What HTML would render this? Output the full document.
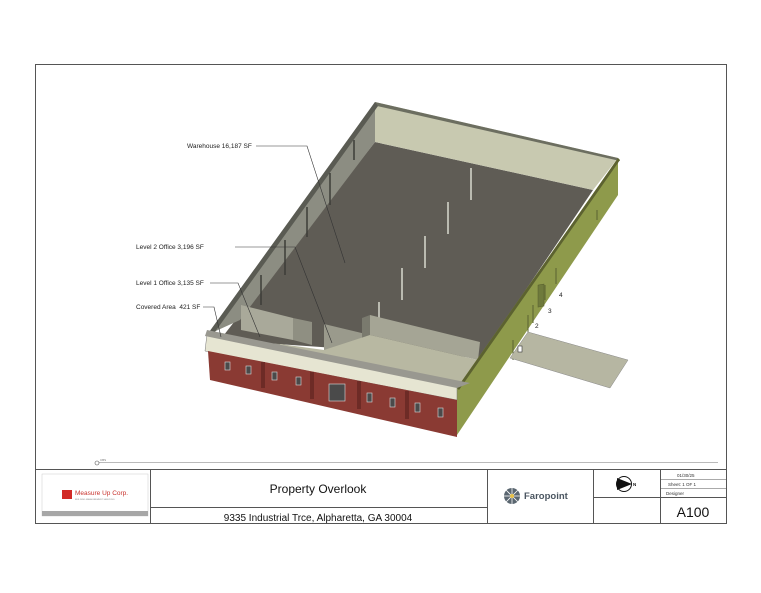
<!DOCTYPE html>
<html><head><style>
body{margin:0;background:#fff;width:761px;height:588px;overflow:hidden;font-family:"Liberation Sans",sans-serif;}
</style></head><body>
<svg width="761" height="588" viewBox="0 0 761 588" xmlns="http://www.w3.org/2000/svg" font-family="Liberation Sans, sans-serif">
<rect x="35.5" y="64.5" width="691" height="459" fill="#fff" stroke="#555" stroke-width="1"/>
<!-- building -->
<!-- floor -->
<polygon points="375,142 593,190 480,358 220,340" fill="#5f5c55"/>
<!-- back wall -->
<polygon points="375,102 618,158 593,190 375,142" fill="#c8c9b0"/>
<polygon points="375,102 618,158 620,161 377,106" fill="#6c6e60"/>
<!-- left wall -->
<polygon points="375,102 375,142 240,320 207,335" fill="#8c8d82"/>
<polygon points="375,102 207,335 212,336 378,106" fill="#5a5b53"/>
<!-- columns -->
<g stroke="#d9d9cf" stroke-width="1.5">
<line x1="471" y1="168" x2="471" y2="200"/><line x1="448" y1="202" x2="448" y2="234"/><line x1="425" y1="236" x2="425" y2="268"/><line x1="402" y1="268" x2="402" y2="300"/><line x1="379" y1="302" x2="379" y2="318"/>
</g>
<g stroke="#3d3d38" stroke-width="1.5">
<line x1="354" y1="140" x2="354" y2="160"/><line x1="330" y1="173" x2="330" y2="205"/><line x1="307" y1="207" x2="307" y2="237"/><line x1="285" y1="240" x2="285" y2="275"/><line x1="261" y1="275" x2="261" y2="305"/>
</g>
<!-- offices -->
<polygon points="241,305 293,318 293,340 241,330" fill="#a9a99a"/>
<polygon points="293,318 312,322 312,345 293,340" fill="#8f8f82"/>
<polygon points="324,324 370,335 370,360 324,350" fill="#9a9a8c"/>
<polygon points="370,315 480,342 478,360 370,335" fill="#a5a595"/>
<polygon points="370,315 370,335 362,338 362,318" fill="#7a7a6e"/>
<polygon points="280,344 324,350 370,335 478,360 468,385 320,370 280,360" fill="#b8b8a2"/>
<polygon points="220,340 280,344 280,360 212,348" fill="#9a9a8c"/>
<!-- right wall -->
<polygon points="618,158 618,195 457,435 457,388" fill="#8e9a4b"/>
<polygon points="618,158 620,160 459,390 457,388" fill="#5c6230"/>
<g fill="#6f7a3c" stroke="#555d2c" stroke-width=".5">
<rect x="538" y="285" width="6" height="22" transform="skewY(-10) translate(0,95)"/>
</g>
<g stroke="#5a6330" stroke-width="1" fill="none">
<polyline points="513,340 513,360"/><polyline points="528,315 528,332"/><polyline points="533,305 533,323"/><polyline points="545,285 545,300"/><polyline points="556,268 556,284"/><polyline points="597,210 597,220"/>
</g>
<!-- ramp -->
<polygon points="510,358 528,332 628,360 610,388" fill="#b6b6a2" stroke="#888" stroke-width=".5"/>
<!-- parapet band -->
<polygon points="207,334 457,384 457,400 205,351" fill="#e6e5d2" stroke="#777" stroke-width=".5"/>
<polygon points="207,330 470,383 457,388 205,336" fill="#999890"/>
<!-- brick -->
<polygon points="208,351 457,400 457,437 210,380" fill="#8a3a33"/>
<g fill="#6d2b26">
<rect x="261" y="362" width="4" height="26"/><rect x="310" y="372" width="4" height="27"/><rect x="357" y="381" width="4" height="28"/><rect x="405" y="391" width="4" height="28"/>
</g>
<g fill="#4a4a4a" stroke="#ddd" stroke-width=".6">
<rect x="225" y="362" width="5" height="8"/><rect x="246" y="366" width="5" height="8"/>
<rect x="272" y="372" width="5" height="8"/><rect x="296" y="377" width="5" height="8"/>
<rect x="329" y="384" width="16" height="17"/>
<rect x="367" y="393" width="5" height="9"/><rect x="390" y="398" width="5" height="9"/>
<rect x="415" y="403" width="5" height="9"/><rect x="438" y="408" width="5" height="9"/>
</g>
<rect x="518" y="346" width="4" height="6" fill="#fff" stroke="#333" stroke-width=".6"/>
<!-- labels -->
<g font-size="6.5" fill="#222">
<text x="187" y="148">Warehouse 16,187 SF</text>
<text x="136" y="249">Level 2 Office 3,196 SF</text>
<text x="136" y="285">Level 1 Office 3,135 SF</text>
<text x="136" y="309">Covered Area&#160; 421 SF</text>
<text x="559" y="297">4</text><text x="548" y="313">3</text><text x="535" y="328">2</text>
</g>
<g stroke="#333" stroke-width=".6" fill="none">
<polyline points="256,146 307,146 345,263"/>
<polyline points="235,247 295,247 332,343"/>
<polyline points="210,283 238,283 260,337"/>
<polyline points="203,307 214,307 221,337"/>
</g>
<!-- bottom scale line -->
<line x1="99" y1="462.5" x2="718" y2="462.5" stroke="#777" stroke-width=".6"/>
<circle cx="97" cy="463" r="2" fill="none" stroke="#555" stroke-width=".6"/>
<text x="100" y="461" font-size="3" fill="#777">CBS</text>
<!-- title block -->
<g stroke="#555" stroke-width="1" fill="none">
<line x1="35" y1="469.5" x2="727" y2="469.5"/>
<line x1="150.5" y1="469" x2="150.5" y2="523"/>
<line x1="487.5" y1="469" x2="487.5" y2="523"/>
<line x1="593.5" y1="469" x2="593.5" y2="523"/>
<line x1="660.5" y1="469" x2="660.5" y2="523"/>
<line x1="150" y1="507.5" x2="487" y2="507.5"/>
<line x1="593" y1="497.5" x2="727" y2="497.5"/>
<line x1="660" y1="479.5" x2="727" y2="479.5" stroke-width=".5"/>
<line x1="660" y1="488.5" x2="727" y2="488.5" stroke-width=".5"/>
</g>
<rect x="42" y="474" width="106" height="42" fill="#fff" stroke="#ccc" stroke-width=".5"/>
<rect x="42" y="511" width="106" height="5" fill="#a7a7a7"/>
<rect x="62" y="490" width="10" height="9" fill="#d22a26"/>
<text x="75" y="495" font-size="6.5" fill="#c8322c">Measure Up Corp.</text>
<text x="75" y="500" font-size="2.2" fill="#888">BUILDING MEASUREMENT SERVICES</text>
<text x="318" y="493" font-size="12" fill="#111" text-anchor="middle">Property Overlook</text>
<text x="318" y="521" font-size="10" fill="#111" text-anchor="middle">9335 Industrial Trce, Alpharetta, GA 30004</text>
<circle cx="512" cy="496" r="8" fill="#5a6670"/>
<g stroke="#fff" stroke-width=".8"><line x1="512" y1="488" x2="512" y2="504"/><line x1="504" y1="496" x2="520" y2="496"/><line x1="506" y1="490" x2="518" y2="502"/><line x1="518" y1="490" x2="506" y2="502"/></g>
<circle cx="512" cy="496" r="2" fill="#e8c24a"/>
<text x="524" y="499" font-size="9.5" font-weight="bold" fill="#4a5560">Faropoint</text>
<circle cx="624" cy="484" r="7.5" fill="#fff" stroke="#111" stroke-width="1"/>
<polygon points="617,478 632,484 617,490" fill="#111"/>
<text x="633" y="486" font-size="4.5" font-weight="bold" fill="#111">N</text>
<g font-size="4.5" fill="#333"><text x="677" y="477">01/30/25</text><text x="668" y="486">Sheet: 1 OF 1</text><text x="666" y="495">Designer</text></g>
<text x="693" y="517" font-size="14" fill="#111" text-anchor="middle">A100</text>
</svg>
</body></html>
